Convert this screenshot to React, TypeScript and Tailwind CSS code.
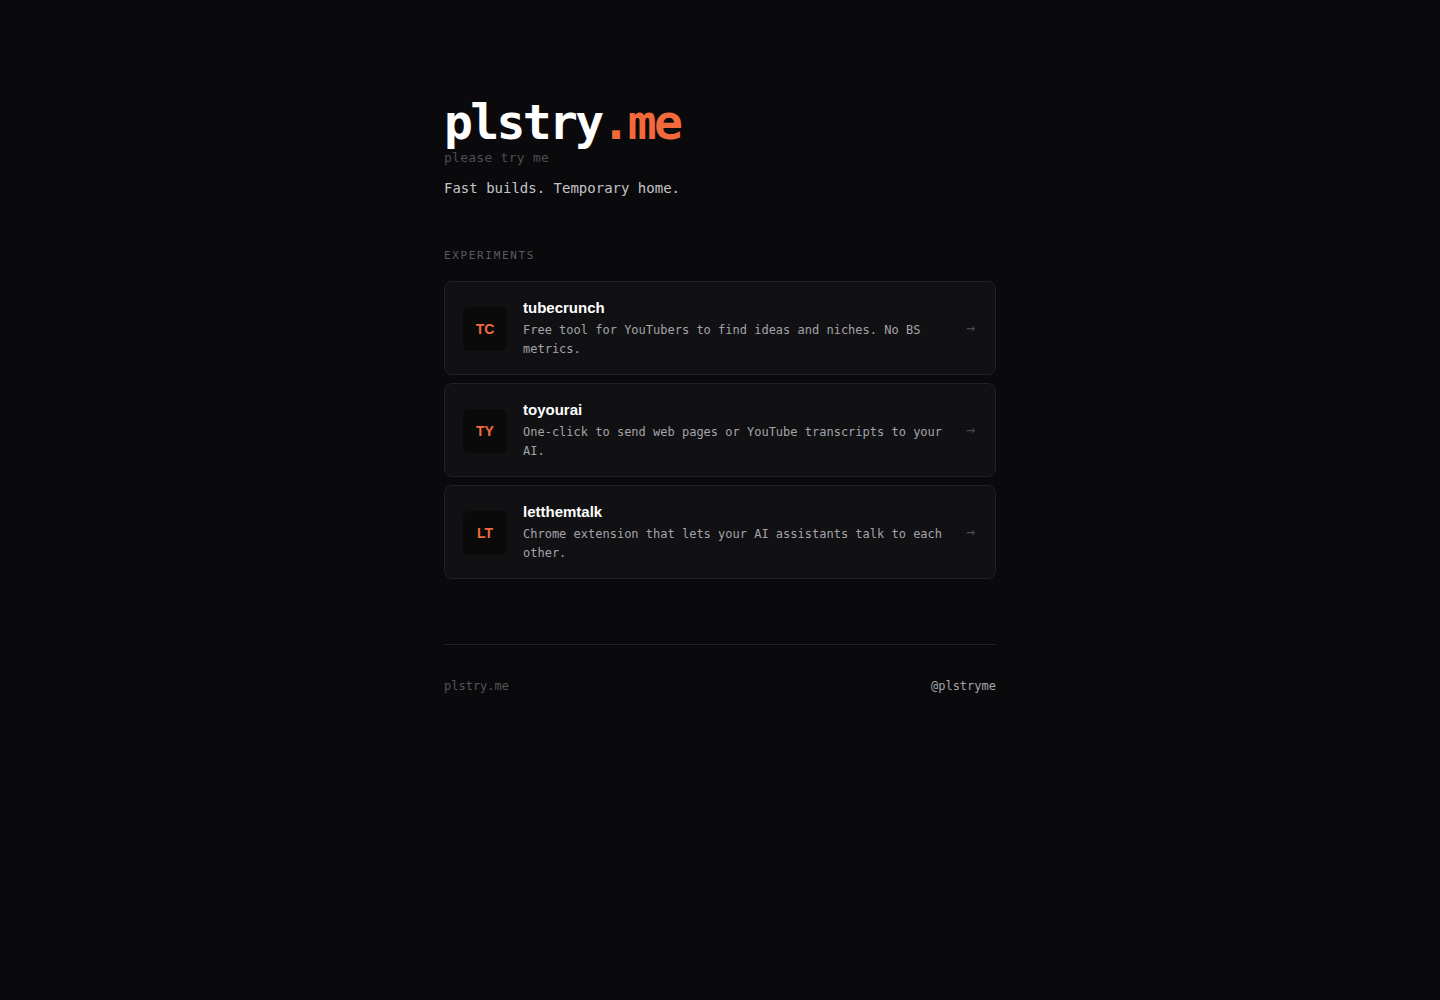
import React from "react";

type Experiment = {
  code: string;
  name: string;
  blurb: string;
};

const experiments: Experiment[] = [
  {
    code: "TC",
    name: "tubecrunch",
    blurb: "Free tool for YouTubers to find ideas and niches. No BS metrics.",
  },
  {
    code: "TY",
    name: "toyourai",
    blurb: "One-click to send web pages or YouTube transcripts to your AI.",
  },
  {
    code: "LT",
    name: "letthemtalk",
    blurb: "Chrome extension that lets your AI assistants talk to each other.",
  },
];

const mono = "font-['DejaVu_Sans_Mono','Liberation_Mono',monospace]";
const sans = "font-['Liberation_Sans',Arial,sans-serif]";

const ExperimentCard = ({ item }: { item: Experiment }) => (
  <a
    href="#"
    className="flex items-center gap-4 rounded-lg border border-[#222226] bg-[#111114] pl-[18px] pr-5 pt-4 pb-[15px] hover:border-[#333338] transition-colors"
  >
    <div
      className={`${sans} flex h-11 w-11 shrink-0 items-center justify-center rounded-md bg-[#0a0a0b] text-sm font-bold text-[#f26a3b]`}
    >
      {item.code}
    </div>
    <div className="min-w-0 flex-1">
      <div className={`${sans} text-[15px] font-bold leading-5 text-white`}>
        {item.name}
      </div>
      <p className={`${mono} mt-[3px] text-xs leading-[19px] text-[#a3a3a8]`}>
        {item.blurb}
      </p>
    </div>
    <span className={`${mono} text-[15px] text-[#4a4a4f]`}>→</span>
  </a>
);

export default function App() {
  return (
    <div className={`${mono} min-h-screen bg-[#0a0a0c]`}>
      <main className="mx-auto w-[552px] pt-[98px] pb-16">
        {/* Header */}
        <header>
          <h1 className="text-5xl font-bold leading-none tracking-[-0.055em] text-white">
            plstry<span className="text-[#f26a3b]">.me</span>
          </h1>
          <div className="mt-1 text-[13px] leading-4 tracking-[0.02em] text-[#4d4d52]">
            please try me
          </div>
          <p className="mt-3 text-sm leading-5 text-[#c4c4c8]">
            Fast builds. Temporary home.
          </p>
        </header>

        {/* Experiments list */}
        <section className="mt-[50px]">
          <h2 className="text-[11px] leading-4 tracking-[0.15em] text-[#5a5a60]">
            EXPERIMENTS
          </h2>
          <div className="mt-[17px] flex flex-col gap-2">
            {experiments.map((item) => (
              <ExperimentCard key={item.code} item={item} />
            ))}
          </div>
        </section>

        {/* Footer */}
        <footer className="mt-[65px] border-t border-[#222226] pt-[33px]">
          <div className="flex items-center justify-between text-xs leading-4">
            <span className="text-[#55555a]">plstry.me</span>
            <a href="#" className="text-[#a3a3a8]">
              @plstryme
            </a>
          </div>
        </footer>
      </main>
    </div>
  );
}
